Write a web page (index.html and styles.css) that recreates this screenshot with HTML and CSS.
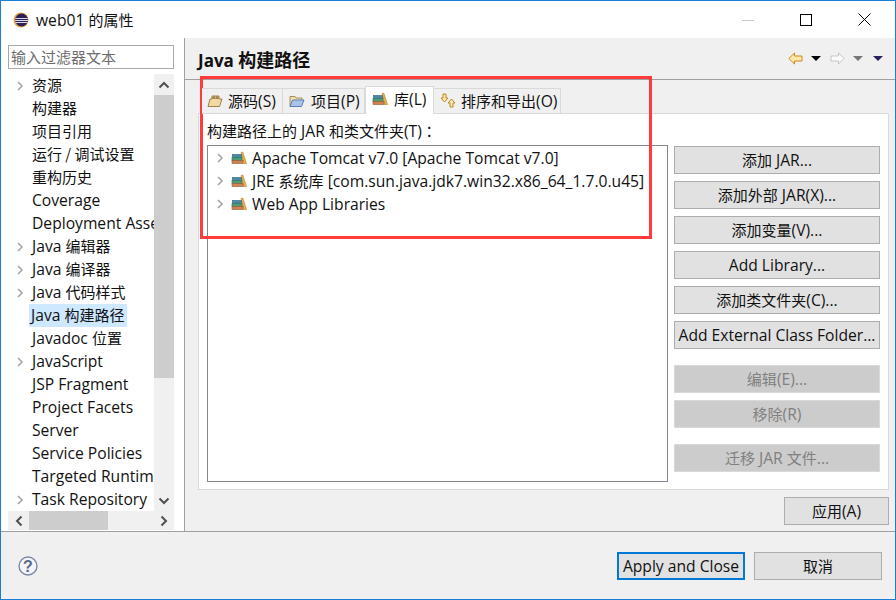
FILE: index.html
```html
<!DOCTYPE html>
<html lang="zh">
<head>
<meta charset="utf-8">
<title>web01 的属性</title>
<link rel="stylesheet" href="styles.css">
</head>
<body>
<svg class="defs" width="0" height="0">
  <symbol id="lib" viewBox="0 0 16 16">
    <path d="M10 2.500 L11.800 2 L15.500 13.500 L12.500 13.500 Z" fill="#eab04a" stroke="#b8801f" stroke-width=".6"/>
    <rect x="1.500" y="4.500" width="9" height="3" fill="#4a86a8" stroke="#2f5f7c" stroke-width=".6"/>
    <rect x="1" y="7.500" width="10" height="3" fill="#4f9c78" stroke="#2f7452" stroke-width=".6"/>
    <rect x="1" y="10.500" width="11" height="3" fill="#cf8355" stroke="#94592f" stroke-width=".6"/>
  </symbol>
  <symbol id="chev" viewBox="0 0 10 12">
    <path d="M3 2 L7 6 L3 10" fill="none" stroke="#a6a6a6" stroke-width="1.600"/>
  </symbol>
</svg>
<div class="window">
  <header class="titlebar">
    <svg class="app-icon" viewBox="0 0 16 16" width="16" height="16">
      <circle cx="8" cy="8" r="7.500" fill="#e8a33d"/>
      <circle cx="8.600" cy="8" r="6.400" fill="#2c2255"/>
      <path d="M2.400 6h12.400v1H2.400zM2.200 8h12.800v1H2.200zM2.600 10h12v1H2.600z" fill="#d8d8ec"/>
    </svg>
    <span class="title-text">web01 <span class="zh">的属性</span></span>
    <div class="win-controls">
      <span class="win-btn"><svg width="12" height="12" viewBox="0 0 12 12"><path d="M0 6.500h12" stroke="#c8c8c8"/></svg></span>
      <span class="win-btn"><svg width="12" height="12" viewBox="0 0 12 12"><rect x=".5" y=".5" width="11" height="11" fill="none" stroke="#000"/></svg></span>
      <span class="win-btn"><svg width="13" height="13" viewBox="0 0 13 13"><path d="M.5 .5l12 12M12.500 .5l-12 12" stroke="#000" fill="none"/></svg></span>
    </div>
  </header>
  <div class="main">
    <aside class="sidebar">
      <div class="filter"><span class="zh">输入过滤器文本</span></div>
      <div class="tree-wrap">
        <ul class="nav-tree">
          <li class="nav-item"><svg class="twist"><use href="#chev"/></svg><span class="zh">资源</span></li>
          <li class="nav-item"><span class="zh">构建器</span></li>
          <li class="nav-item"><span class="zh">项目引用</span></li>
          <li class="nav-item"><span class="zh">运行 / 调试设置</span></li>
          <li class="nav-item"><span class="zh">重构历史</span></li>
          <li class="nav-item"><span>Coverage</span></li>
          <li class="nav-item"><span>Deployment Assembly</span></li>
          <li class="nav-item"><svg class="twist"><use href="#chev"/></svg><span>Java <span class="zh">编辑器</span></span></li>
          <li class="nav-item"><svg class="twist"><use href="#chev"/></svg><span>Java <span class="zh">编译器</span></span></li>
          <li class="nav-item"><svg class="twist"><use href="#chev"/></svg><span>Java <span class="zh">代码样式</span></span></li>
          <li class="nav-item"><span class="selected">Java <span class="zh">构建路径</span></span></li>
          <li class="nav-item"><span>Javadoc <span class="zh">位置</span></span></li>
          <li class="nav-item"><svg class="twist"><use href="#chev"/></svg><span>JavaScript</span></li>
          <li class="nav-item"><span>JSP Fragment</span></li>
          <li class="nav-item"><span>Project Facets</span></li>
          <li class="nav-item"><span>Server</span></li>
          <li class="nav-item"><span>Service Policies</span></li>
          <li class="nav-item"><span>Targeted Runtimes</span></li>
          <li class="nav-item"><svg class="twist"><use href="#chev"/></svg><span>Task Repository</span></li>
        </ul>
        <div class="vscroll">
          <span class="arrow"><svg width="12" height="8" viewBox="0 0 12 8"><path d="M1.500 6.500L6 2l4.500 4.500" fill="none" stroke="#505050" stroke-width="2"/></svg></span>
          <span class="vthumb"></span>
          <span class="arrow arrow-end"><svg width="12" height="8" viewBox="0 0 12 8"><path d="M1.500 1.500L6 6l4.500-4.500" fill="none" stroke="#505050" stroke-width="2"/></svg></span>
        </div>
        <div class="hscroll">
          <span class="harrow"><svg width="8" height="12" viewBox="0 0 8 12"><path d="M6.500 1.500L2 6l4.500 4.500" fill="none" stroke="#505050" stroke-width="2"/></svg></span>
          <span class="hthumb"></span>
          <span class="harrow harrow-end"><svg width="8" height="12" viewBox="0 0 8 12"><path d="M1.500 1.500L6 6l-4.500 4.500" fill="none" stroke="#505050" stroke-width="2"/></svg></span>
        </div>
      </div>
    </aside>
    <section class="content">
      <div class="page-head">
        <h1 class="page-title">Java <span class="title-zh">构建路径</span></h1>
        <div class="nav-icons">
          <svg width="15" height="13" viewBox="0 0 15 13"><path d="M.8 6.500L6.500 1v3h7.500v5H6.500v3z" fill="#fde9ac" stroke="#c98a1e"/></svg>
          <span class="tri tri-black"></span>
          <svg class="fwd" width="15" height="13" viewBox="0 0 15 13"><path d="M14.200 6.500L8.500 1v3H1v5h7.500v3z" fill="#fafafa" stroke="#c6c6c6"/></svg>
          <span class="tri tri-gray"></span>
          <span class="tri tri-purple"></span>
        </div>
      </div>
      <div class="page-body">
        <div class="tabs">
          <div class="tab">
            <svg width="16" height="14" viewBox="0 0 16 14"><path d="M1 12.500L3 5h2V2h7v3h3l-2.500 7.500z" fill="#f0d9a5" stroke="#a3804a"/><path d="M7 2v3M10 2v3M5 4h7" stroke="#8a6a3a" fill="none"/></svg>
            <span><span class="zh">源码</span>(S)</span>
          </div>
          <div class="tab">
            <svg width="16" height="14" viewBox="0 0 16 14"><path d="M1 12.500V2.500h5l1 1.500h6v2" fill="#f2dfae" stroke="#a88c58"/><path d="M1 12.500L3.500 6H15l-2.500 6.500z" fill="#a9c4e8" stroke="#5a7fb5"/></svg>
            <span><span class="zh">项目</span>(P)</span>
          </div>
          <div class="tab tab-active">
            <svg width="16" height="16"><use href="#lib"/></svg>
            <span><span class="zh">库</span>(L)</span>
          </div>
          <div class="tab">
            <svg width="16" height="15" viewBox="0 0 16 15"><path d="M3 1h3v4h2L4.500 9 1 5h2z" fill="#fbe6a8" stroke="#b98a2a"/><path d="M10 14h3v-4h2l-3.500-4L8 10h2z" fill="#fbe6a8" stroke="#b98a2a"/></svg>
            <span><span class="zh">排序和导出</span>(O)</span>
          </div>
        </div>
        <div class="tab-panel">
          <div class="panel-label"><span class="zh">构建路径上的</span> JAR <span class="zh">和类文件夹</span>(T)<span class="zh-colon" lang="zh-TW">：</span></div>
          <div class="panel-columns">
            <div class="cp-tree">
              <div class="cp-row"><svg class="twist"><use href="#chev"/></svg><svg class="lib" width="16" height="16"><use href="#lib"/></svg><span>Apache Tomcat v7.0 [Apache Tomcat v7.0]</span></div>
              <div class="cp-row"><svg class="twist"><use href="#chev"/></svg><svg class="lib" width="16" height="16"><use href="#lib"/></svg><span>JRE <span class="zh">系统库</span> [com.sun.java.jdk7.win32.x86_64_1.7.0.u45]</span></div>
              <div class="cp-row"><svg class="twist"><use href="#chev"/></svg><svg class="lib" width="16" height="16"><use href="#lib"/></svg><span>Web App Libraries</span></div>
            </div>
            <div class="side-buttons">
              <button class="btn"><span class="zh">添加</span> JAR...</button>
              <button class="btn"><span class="zh">添加外部</span> JAR(X)...</button>
              <button class="btn"><span class="zh">添加变量</span>(V)...</button>
              <button class="btn">Add Library...</button>
              <button class="btn"><span class="zh">添加类文件夹</span>(C)...</button>
              <button class="btn">Add External Class Folder...</button>
              <button class="btn btn-off gap-a"><span class="zh">编辑</span>(E)...</button>
              <button class="btn btn-off"><span class="zh">移除</span>(R)</button>
              <button class="btn btn-off gap-b"><span class="zh">迁移</span> JAR <span class="zh">文件</span>...</button>
            </div>
          </div>
        </div>
        <div class="apply-row"><button class="btn btn-apply"><span class="zh">应用</span>(A)</button></div>
      </div>
    </section>
  </div>
  <footer class="footer">
    <svg class="help" width="20" height="20" viewBox="0 0 20 20"><circle cx="10" cy="10" r="9" fill="#f4f5f8" stroke="#7d8aa3" stroke-width="1.400"/><text x="10" y="15.500" text-anchor="middle" class="help-q">?</text></svg>
    <div class="footer-buttons">
      <button class="btn btn-main btn-default">Apply and Close</button>
      <button class="btn btn-main"><span class="zh">取消</span></button>
    </div>
  </footer>
  <div class="callout"></div>
</div>
</body>
</html>
```

FILE: styles.css
```css
* { box-sizing: border-box; }
html, body { margin: 0; padding: 0; }
body {
  width: 896px; height: 600px; overflow: hidden;
  font-family: "Open Sans", "Noto Sans CJK SC", sans-serif;
  font-size: 15.65px; color: #111;
}
.zh { font-size: 15px; font-family: "Noto Sans CJK SC", sans-serif; }
.zh-colon { font-size: 15px; font-family: "Noto Sans CJK TC", sans-serif; }
.defs { position: absolute; }
.window {
  position: relative; width: 896px; height: 600px;
  display: flex; flex-direction: column;
  border: 1px solid #1a7fd4; background: #f0f0f0;
}
.titlebar {
  height: 37px; flex: none; display: flex; align-items: center;
  background: #fff; padding-left: 12px;
}
.app-icon { margin-right: 7px; }
.win-controls { margin-left: auto; display: flex; padding-right: 1px; }
.win-btn { width: 58.500px; height: 37px; display: flex; align-items: center; justify-content: center; }
.main { flex: 1; min-height: 0; display: flex; }
.sidebar {
  width: 184px; flex: none; background: #fff;
  border-right: 1px solid #a0a0a0; padding: 7px 10px 0 7px;
  display: flex; flex-direction: column;
}
.filter {
  height: 24px; flex: none; border: 1px solid #a9a9a9;
  color: #6d6d6d; line-height: 21px; padding-left: 2px;
  white-space: nowrap; overflow: hidden;
}
.tree-wrap {
  margin-top: 5px; display: grid;
  grid-template-columns: 146px 20px; grid-template-rows: 437px 19px;
}
.nav-tree { list-style: none; margin: 0; padding: 0; overflow: hidden; }
.nav-item {
  position: relative; height: 23px; padding-left: 24px; white-space: nowrap;
  line-height: 22px;
}
.nav-item .twist { position: absolute; left: 7px; top: 6px; }
.twist { width: 10px; height: 12px; flex: none; }
.selected { display: inline-block; height: 23px; background: #cde8ff; padding: 0 3px 0 2px; margin-left: -3px; }
.vscroll { background: #f0f0f0; display: flex; flex-direction: column; }
.arrow { height: 21px; flex: none; display: flex; align-items: center; justify-content: center; }
.arrow-end { margin-top: auto; }
.vthumb { height: 283px; flex: none; background: #cdcdcd; }
.hscroll { grid-column: 1 / 3; background: #f0f0f0; display: flex; align-items: center; }
.harrow { width: 21px; height: 19px; flex: none; display: flex; align-items: center; justify-content: center; }
.harrow-end { margin-left: auto; }
.hthumb { width: 79px; height: 19px; background: #cdcdcd; }
.content { flex: 1; min-width: 0; display: flex; flex-direction: column; }
.page-head {
  height: 42px; flex: none; display: flex; align-items: center;
  justify-content: space-between; border-bottom: 1px solid #a0a0a0;
  padding: 0 12px 0 13px;
}
.page-title { margin: 0; font-size: 17px; font-weight: 700; }
.title-zh { font-size: 18px; font-family: "Noto Sans CJK SC", sans-serif; }
.nav-icons { display: flex; align-items: center; }
.tri { width: 0; height: 0; border-left: 5px solid transparent; border-right: 5px solid transparent; border-top: 5px solid #000; }
.tri-black { margin-left: 8px; }
.fwd { margin-left: 9px; }
.tri-gray { margin-left: 8px; border-top-color: #777; }
.tri-purple { margin-left: 10px; border-top-color: #2c1f5c; }
.page-body { flex: 1; min-height: 0; padding: 6px 6px 0 13px; display: flex; flex-direction: column; }
.tabs { display: flex; height: 28px; align-items: flex-end; padding-left: 4px; position: relative; z-index: 1; margin-bottom: -1px; }
.tab {
  height: 26px; display: flex; align-items: center; gap: 5px; padding: 0 0 1px 5px;
  background: #f0f0f0; border: 1px solid #d9d9d9; border-left: 0;
  white-space: nowrap;
}
.tab:nth-child(1) { width: 81px; }
.tab:nth-child(2) { width: 82px; padding-left: 6px; gap: 6px; }
.tab:nth-child(4) { width: 127px; padding-left: 6px; gap: 5px; }
.tab-active {
  width: 69px; height: 28px; background: #fff; border-bottom: 0; border-left: 1px solid #d9d9d9;
  padding: 0 0 4px 6px; gap: 6px;
}
.tab-panel {
  height: 377px; flex: none; background: #fff; border: 1px solid #d9d9d9;
  padding: 6px 8px 7px 8px; display: flex; flex-direction: column;
}
.panel-label { height: 25px; line-height: 21px; white-space: nowrap; flex: none; }
.panel-columns { flex: 1; display: flex; min-height: 0; }
.cp-tree { width: 461px; border: 1px solid #828790; flex: none; }
.cp-row { height: 23px; display: flex; align-items: center; padding-left: 7px; white-space: nowrap; }
.lib { margin-left: 6px; margin-right: 5px; flex: none; }
.side-buttons { margin-left: 6px; width: 206px; display: flex; flex-direction: column; gap: 7px; padding-top: 1px; }
.btn {
  font: inherit; color: #111; height: 28px; flex: none; width: 100%;
  background: #e1e1e1; border: 1px solid #adadad; padding: 0; white-space: nowrap;
}
.btn-off { background: #cccccc; border-color: #d9d9d9; color: #808080; }
.gap-a { margin-top: 9px; }
.gap-b { margin-top: 9px; }
.apply-row { display: flex; justify-content: flex-end; margin-top: 7px; }
.btn-apply { width: 105px; }
.footer {
  height: 68px; flex: none; border-top: 1px solid #a0a0a0;
  display: flex; align-items: center; justify-content: space-between;
  padding: 0 13px 0 17px;
}
.help-q { font-family: "Liberation Sans", sans-serif; font-size: 16px; font-weight: 700; fill: #5a6b8c; }
.footer-buttons { display: flex; gap: 9px; }
.btn-main { width: 128px; }
.btn-default { border: 2px solid #0078d7; }
.callout {
  position: absolute; left: 199px; top: 75px; width: 452px; height: 163px;
  border: 3px solid #ff3b3b; pointer-events: none;
}
```
